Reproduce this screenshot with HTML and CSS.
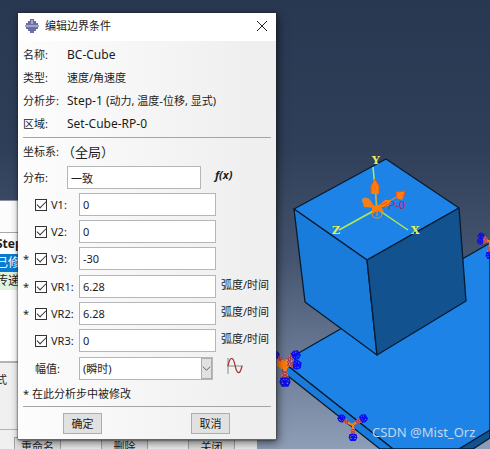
FILE: index.html
```html
<!DOCTYPE html>
<html lang="zh-CN">
<head>
<meta charset="utf-8">
<title>编辑边界条件</title>
<link rel="stylesheet" href="styles.css">
</head>
<body>
<main class="desktop">
  <svg class="scene" viewBox="0 0 490 449" preserveAspectRatio="xMinYMin slice" aria-hidden="true">
    <defs>
      <g id="cone">
        <path class="stem" d="M0 0V14"/>
        <path class="sleeve" d="M-2 5H2L4 14H-4Z"/>
        <path class="dots" d="M-3 6L3 9L-3 12L3 14M3 6L-3 9L3 12L-3 14"/>
        <path class="ring" d="M-4 14H4L5 18L3 22H-3L-5 18ZM-5 18H5M0 14V22M-4 14L3 22M4 14L-3 22"/>
      </g>
    </defs>
    <g class="edges">
      <path class="top" d="M283 362L490 243V431L459 449H393Z"/>
      <path class="left" d="M283 362L393 449H380L283 372Z"/>
      <path class="right" d="M459 449L490 430V438L473 449Z"/>
      <path class="top" d="M294 209L386 159L459 208L367 260Z"/>
      <path class="left" d="M294 209L367 260L377 355L305 302Z"/>
      <path class="right" d="M367 260L459 208L466 301L377 355Z"/>
    </g>
    <g class="axes">
      <path d="M377 209L373 167M377 209L339 230M377 209L408 230"/>
      <text x="372" y="164">Y</text>
      <text x="332" y="234">Z</text>
      <text x="411" y="234">X</text>
    </g>
    <text class="point" x="388" y="209">P-0</text>
    <g class="load">
      <path class="rod" d="M376 209V190M376 209L400 195M376 209L366 201M377 209V216"/>
      <path class="fill" d="M375 179L379 186V194H371V186ZM396 192L405 191L402 200L396 198ZM376 208L385 200L391 200L389 206ZM376 208L364 207L362 199L368 198Z"/>
      <ellipse class="rod" cx="377" cy="214" rx="5" ry="4"/>
      <ellipse class="rod" cx="367" cy="202" rx="5" ry="3" transform="rotate(35 367 202)"/>
      <path class="fill" d="M372 206L380 205L384 212L377 211L372 214Z"/>
      <path class="hatch" d="M371 194V186L375 179L379 186V194M397 198L396 192L405 191L403 200M381 205L387 202M384 207L390 203"/>
    </g>
    <g class="support">
      <path class="fill" d="M277 354L284 361L293 354L291 364L285 371L277 366Z"/>
      <use href="#cone" transform="translate(285 365) scale(.95)"/>
      <use href="#cone" transform="translate(283 363) rotate(-122) scale(.85)"/>
      <use href="#cone" transform="translate(282 363) rotate(-83) scale(.85)"/>
      <use href="#cone" transform="translate(285 363) rotate(130) scale(.7)"/>
      <use href="#cone" transform="translate(353 424) scale(.75)"/>
      <use href="#cone" transform="translate(352 425) rotate(-120) scale(.75)"/>
      <use href="#cone" transform="translate(352 425) rotate(122) scale(.7)"/>
      <use href="#cone" transform="translate(490 242) scale(.75)"/>
      <use href="#cone" transform="translate(490 242) rotate(124) scale(.6)"/>
      <use href="#cone" transform="translate(491 241) rotate(88) scale(.6)"/>
    </g>
    <text class="watermark" x="372" y="437">CSDN @Mist_Orz</text>
  </svg>

  <section class="manager">
    <div class="manager-head"></div>
    <table class="steps">
      <tbody>
        <tr><th>Step</th></tr>
        <tr class="selected"><td>已修</td></tr>
        <tr class="passed"><td>传递</td></tr>
      </tbody>
    </table>
    <div class="manager-info">式</div>
    <div class="manager-actions">
      <button type="button">重命名</button>
      <button type="button">删除</button>
      <button type="button">关闭</button>
    </div>
  </section>

  <form class="dialog">
    <header class="titlebar">
      <svg class="logo" viewBox="0 0 14 14" aria-hidden="true">
        <path class="logo-body" d="M5 0H9V2H11V4H13V6H14V8H13V10H11V12H9V14H5V12H3V10H1V8H0V6H1V4H3V2H5Z"/>
        <path class="logo-line" d="M0 7H14M7 1V5"/>
      </svg>
      <h1>编辑边界条件</h1>
      <button class="close" type="button" aria-label="关闭">
        <svg viewBox="0 0 10 10"><path d="M0 0L10 10M10 0L0 10"/></svg>
      </button>
    </header>
    <div class="content">
      <dl class="info">
        <dt>名称:</dt><dd class="latin">BC-Cube</dd>
        <dt>类型:</dt><dd>速度/角速度</dd>
        <dt>分析步:</dt><dd><span class="latin">Step-1 (</span>动力, 温度-位移, 显式)</dd>
        <dt>区域:</dt><dd class="latin">Set-Cube-RP-0</dd>
      </dl>
      <hr>
      <div class="csys"><span>坐标系:</span><span class="global">（全局）</span></div>
      <div class="distribution">
        <label for="dist">分布:</label>
        <input id="dist" type="text" value="一致">
        <button class="fx" type="button">f(x)</button>
      </div>
      <div class="fields">
        <div class="field"><span></span><input type="checkbox" id="c1" checked><label for="c1">V1:</label><input type="text" aria-label="V1" value="0"></div>
        <div class="field"><span></span><input type="checkbox" id="c2" checked><label for="c2">V2:</label><input type="text" aria-label="V2" value="0"></div>
        <div class="field"><span>*</span><input type="checkbox" id="c3" checked><label for="c3">V3:</label><input type="text" aria-label="V3" value="-30"></div>
      </div>
      <div class="fields">
        <div class="field"><span>*</span><input type="checkbox" id="c4" checked><label for="c4">VR1:</label><input type="text" aria-label="VR1" value="6.28"><span class="unit">弧度/时间</span></div>
        <div class="field"><span>*</span><input type="checkbox" id="c5" checked><label for="c5">VR2:</label><input type="text" aria-label="VR2" value="6.28"><span class="unit">弧度/时间</span></div>
        <div class="field"><span></span><input type="checkbox" id="c6" checked><label for="c6">VR3:</label><input type="text" aria-label="VR3" value="0"><span class="unit">弧度/时间</span></div>
      </div>
      <div class="amplitude">
        <label for="amp">幅值:</label>
        <div class="select">
          <select id="amp"><option>(瞬时)</option></select>
          <svg class="arrow" viewBox="0 0 10 20" aria-hidden="true"><path d="M1 8L5 12L9 8"/></svg>
        </div>
        <button class="curve" type="button" aria-label="创建幅值">
          <svg viewBox="0 0 16 16"><path class="axis" d="M1 0V16M0 8H16"/><path class="wave" d="M1 8C3 -2 6 -2 8 7C10 17 13 17 15 8"/></svg>
        </button>
      </div>
      <p class="note">* 在此分析步中被修改</p>
      <hr>
      <footer class="actions">
        <button type="button">确定</button>
        <button type="button">取消</button>
      </footer>
    </div>
  </form>
</main>
</body>
</html>
```

FILE: styles.css
```css
* { box-sizing: border-box; }

body {
  margin: 0;
  font: 11px/16px "Noto Sans", "Noto Sans CJK SC", sans-serif;
  color: #1c1c1c;
}

button, input, select { font: inherit; color: inherit; margin: 0; }

.desktop {
  position: relative;
  min-height: 100vh;
  overflow: hidden;
  background: linear-gradient(#283851 0%, #303f59 33%, #46556f 58%, #6c7b95 80%, #8f9eb7 100%);
}

/* model viewport */
.scene { position: absolute; inset: 0; width: 100%; height: 100%; }
.edges path { stroke: #071a30; stroke-width: 1.3; stroke-linejoin: round; }
.edges .top { fill: #1e83e6; }
.edges .left { fill: #1a7cda; }
.edges .right { fill: #12528f; }
.axes path { stroke: #b4ea50; stroke-width: 1.5; fill: none; }
.axes text { fill: #e2f25c; font: bold 11px "DejaVu Serif", serif; }
.point { fill: #b02060; font: 11px "Liberation Sans", sans-serif; }
.load .fill, .support .fill { fill: #ff7d0a; }
.load .rod { stroke: #c98a50; stroke-width: 1.3; fill: none; }
.load .hatch { stroke: #f0501e; fill: none; }
.stem { stroke: #ff7d0a; stroke-width: 3; }
.sleeve { fill: #f08a50; }
.dots { stroke: #90305a; stroke-width: 1; fill: none; }
.ring { stroke: #0c0cf0; stroke-width: 1.6; fill: none; }
.watermark { fill: #c5d7ea; font: 13px "Noto Sans", sans-serif; }

/* window behind the dialog */
.manager {
  position: absolute;
  left: 0;
  top: 200px;
  bottom: 0;
  width: 257px;
  overflow: hidden;
  display: flex;
  flex-direction: column;
  background: #f0f0f0;
  border-top: 1px solid #8c939e;
}
.manager > * { flex: none; }
.manager-head { height: 31px; background: #fcfcfc; }
.steps { display: block; width: 100%; height: 131px; border-spacing: 0; background: #fff; border-top: 1px solid #a8a8a8; border-bottom: 2px solid #b4b4b4; }
.steps tbody, .steps tr { display: block; }
.steps tr { height: 18px; }
.steps tr:first-child { height: 21px; padding-top: 2px; }
.steps th, .steps td { padding: 0; display: block; margin-left: -4px; font-size: 12px; line-height: 18px; }
.steps th { text-align: left; font-weight: bold; }
.steps .selected { background: #0b7ad1; color: #fff; }
.steps .passed { background: #e2f3dc; }
.manager-info { height: 67px; padding-top: 9px; margin-left: -4px; border-bottom: 1px solid #b4b4b4; }
.manager-actions { display: flex; gap: 40px; padding: 7px 14px 0; }
.manager-actions button { width: 47px; height: 20px; flex: none; padding: 0; line-height: 16px; border: 1px solid #a6a6a6; background: #e1e1e1; }

/* dialog */
.dialog {
  position: absolute;
  left: 18px;
  top: 13px;
  width: 258px;
  border-bottom: 1px solid #666;
  background: linear-gradient(90deg, #fdfdfd, #efefef 90%);
  box-shadow: 0 0 2px #222, 2px 3px 9px rgba(0, 0, 0, .55);
}
.titlebar { display: flex; align-items: center; height: 28px; padding: 0 9px 2px 7px; background: #fff; }
.titlebar h1 { flex: 1; margin: 0 0 0 6px; font-size: 11px; font-weight: normal; }
.logo { width: 14px; height: 14px; }
.logo-body { fill: #6c6fa6; }
.logo-line { stroke: #dcdcf0; stroke-width: 1; }
.close { width: 10px; height: 10px; padding: 0; border: 0; background: none; display: flex; }
.close svg { width: 10px; height: 10px; overflow: visible; stroke: #222; }

.content { padding: 2px 5px 5px; }
hr { height: 1px; margin: 0; border: 0; background: #a5a5a5; }
.info { display: grid; grid-template-columns: 44px 1fr; grid-auto-rows: 23px; margin: 0 0 2px; line-height: 24px; white-space: nowrap; }
.info dd { margin: 0; }
.latin { font-size: 12px; }

.csys { display: flex; height: 28px; align-items: center; }
.csys span:first-child { width: 39px; }
.csys .global { font-size: 13px; }

input[type="text"], select {
  height: 23px;
  padding: 0 3px;
  border: 1px solid #b4b7ba;
  border-radius: 0;
  background: #fff;
  outline: 0;
}
.distribution { display: grid; grid-template-columns: 44px 134px 1fr; align-items: center; }
.distribution input { width: 100%; }
.fx { justify-self: start; margin-left: 14px; padding: 0 0 6px; border: 0; background: none; font: italic bold 11px/16px "Noto Sans", sans-serif; }

.fields { display: grid; gap: 4px; margin-top: 4px; }
.fields + .fields { margin-top: 5px; }
.field { display: grid; grid-template-columns: 12px 16px 28px 137px 1fr; align-items: center; }
.field input[type="text"] { width: 100%; }
.field .unit { padding: 0 0 4px 5px; white-space: nowrap; }
input[type="checkbox"] {
  appearance: none;
  width: 12px;
  height: 12px;
  border: 1px solid #333;
  background: #fff;
  display: grid;
  place-items: center;
}
input[type="checkbox"]:checked::before {
  content: "";
  width: 8px;
  height: 4px;
  border: solid #333;
  border-width: 0 0 1px 1px;
  transform: translateY(-1px) rotate(-45deg);
}

.amplitude { display: grid; grid-template-columns: 44px 134px 1fr; align-items: center; margin-top: 5px; padding-left: 12px; }
.select { display: grid; align-items: center; }
.select > * { grid-area: 1 / 1; }
.select select { appearance: none; width: 100%; }
.arrow { justify-self: end; width: 11px; height: 21px; margin-right: 1px; border: 1px solid #adadad; background: #e1e1e1; pointer-events: none; }
.arrow path { fill: none; stroke: #555; }
.curve { margin-left: 14px; padding: 0 0 5px; width: 16px; border: 0; background: none; display: flex; }
.curve svg { width: 16px; height: 16px; fill: none; }
.axis { stroke: #888; }
.wave { stroke: #a83238; stroke-width: 1.2; }

.note { margin: 6px 0 4px; }
.actions { display: flex; justify-content: space-between; padding: 6px 41px 0 40px; }
.actions button { width: 39px; height: 21px; padding: 0; line-height: 16px; border: 1px solid #adadad; background: #e1e1e1; }
```
